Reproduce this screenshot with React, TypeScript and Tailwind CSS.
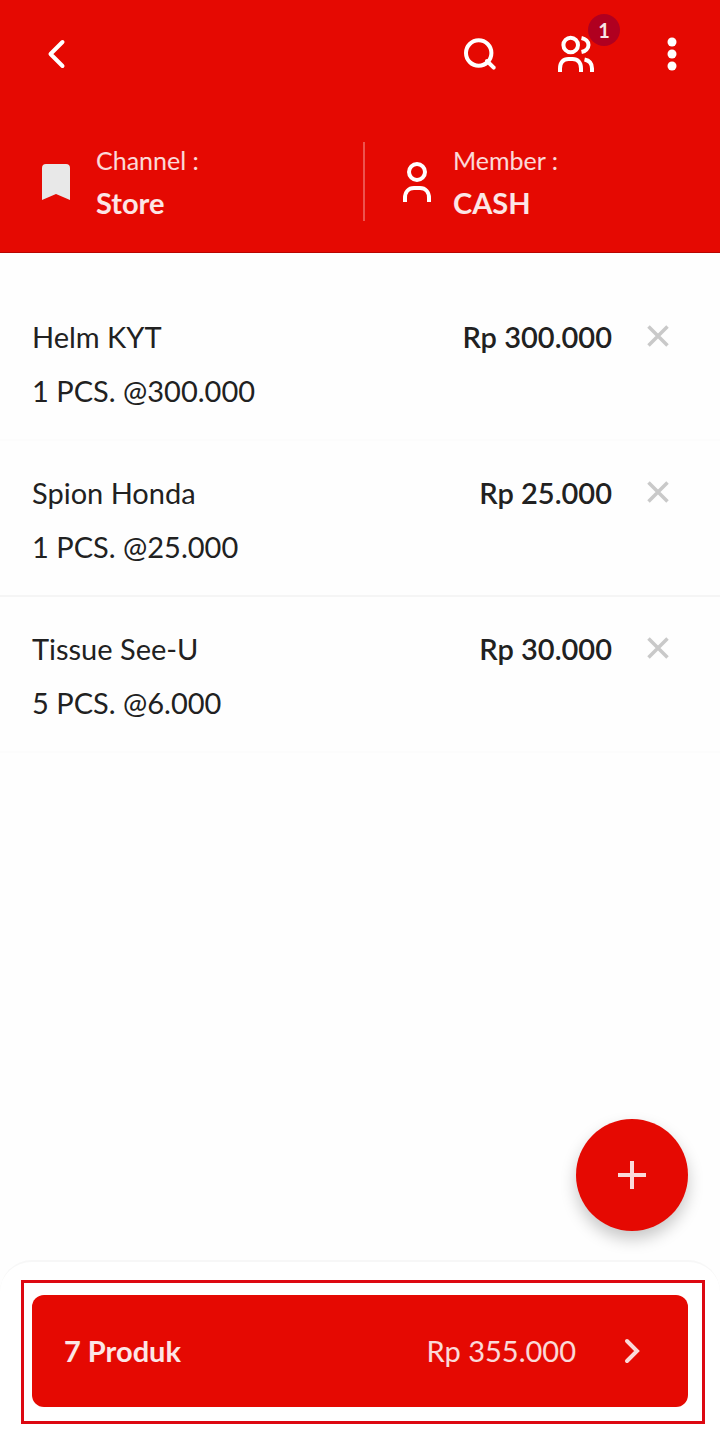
import { ReactNode } from 'react';

const items = [
  { name: 'Helm KYT', qty: '1 PCS. @300.000', total: 'Rp 300.000' },
  { name: 'Spion Honda', qty: '1 PCS. @25.000', total: 'Rp 25.000' },
  { name: 'Tissue See-U', qty: '5 PCS. @6.000', total: 'Rp 30.000' },
];

function Icon({ children, className = 'size-12' }: { children: ReactNode; className?: string }) {
  return (
    <svg
      viewBox="0 0 48 48"
      fill="none"
      stroke="currentColor"
      strokeWidth="4"
      className={className}
      aria-hidden="true"
    >
      {children}
    </svg>
  );
}

function TopBar() {
  return (
    <div className="flex items-center justify-between px-8 pt-[30px]">
      <button aria-label="Kembali">
        <Icon>
          <path d="M30.500 12 18.500 24l12 12" strokeLinecap="round" strokeLinejoin="round" />
        </Icon>
      </button>
      <div className="flex gap-12 -mr-2">
        <button aria-label="Cari">
          <Icon>
            <circle cx="22.700" cy="23" r="12.700" />
            <path d="m31 31 6.700 6.700" strokeLinecap="round" />
          </Icon>
        </button>
        <button aria-label="Antrian" className="relative">
          <Icon>
            <circle cx="18.700" cy="15" r="7.300" />
            <path d="M8 42v-3.500c0-6 3-9.500 8.500-9.500h4c5.500 0 8.500 3.500 8.500 9.500V42" />
            <path d="M29.500 8c4 .8 7 3.600 7 7s-3 6.200-7 7" />
            <path d="M32.500 29.500c5 1 7.500 4 7.500 9V42" />
          </Icon>
          <span className="absolute -top-4 -right-5 size-8 rounded-full bg-[#b00020] text-xl leading-8 font-bold text-white/90">
            1
          </span>
        </button>
        <button aria-label="Menu">
          <Icon>
            <g fill="currentColor" stroke="none">
              <circle cx="24" cy="12" r="4.500" />
              <circle cx="24" cy="24" r="4.500" />
              <circle cx="24" cy="36" r="4.500" />
            </g>
          </Icon>
        </button>
      </div>
    </div>
  );
}

function InfoCell({
  icon,
  label,
  value,
  className,
}: {
  icon: ReactNode;
  label: string;
  value: string;
  className: string;
}) {
  return (
    <button className={`flex items-center text-left ${className}`}>
      {icon}
      <span className="flex flex-col gap-[7px] leading-9">
        <span className="text-[25px] text-white/85">{label}</span>
        <span className="font-bold text-white/90">{value}</span>
      </span>
    </button>
  );
}

export default function App() {
  return (
    <div className="flex min-h-screen flex-col bg-[#fefefe] font-['Lato','Open_Sans',sans-serif] text-[29px] text-[#212121]">
      <header className="border-b border-[#b80500] bg-[#e50902] pb-[31px] text-white">
        <TopBar />
        <div className="mt-16 grid grid-cols-2">
          <InfoCell
            className="gap-4 pl-8"
            label="Channel :"
            value="Store"
            icon={
              <Icon>
                <path
                  d="M14 6h20a4 4 0 0 1 4 4v32l-14-6-14 6V10a4 4 0 0 1 4-4z"
                  fill="#e8e8e8"
                  stroke="none"
                />
              </Icon>
            }
          />
          <InfoCell
            className="gap-3 border-l-2 border-white/30 pl-7 ml-[3px]"
            label="Member :"
            value="CASH"
            icon={
              <Icon>
                <circle cx="24" cy="14" r="8" />
                <path d="M12 44v-4c0-6 3.500-10 9-10h6c5.500 0 9 4 9 10v4" />
              </Icon>
            }
          />
        </div>
      </header>

      <ul className="grow pt-8">
        {items.map((item) => (
          <li
            key={item.name}
            className="flex items-start border-b-2 border-[#fcfcfc] pt-[25px] pr-[38px] pb-[21px] pl-8 leading-[54px] even:border-[#f5f5f5]"
          >
            <div className="grow">
              <p>{item.name}</p>
              <p>{item.qty}</p>
            </div>
            <p className="font-semibold">{item.total}</p>
            <button aria-label={`Hapus ${item.name}`} className="ml-[22px] py-0.5 text-[#c9c9c9]">
              <Icon>
                <path d="m14.500 14.500 19 19m0-19-19 19" strokeWidth="3.500" />
              </Icon>
            </button>
          </li>
        ))}
      </ul>

      <footer className="relative rounded-t-[32px] border-t-2 border-[#f7f7f7] bg-white pt-[18px] pr-[15px] pb-[15px] pl-[21px]">
        <button
          aria-label="Tambah"
          className="absolute right-8 bottom-full mb-[31px] flex size-28 items-center justify-center rounded-full bg-[#e50902] text-white/85 shadow-[0_8px_16px_rgba(0,0,0,0.22)]"
        >
          <Icon>
            <path d="M24 10v28M10 24h28" />
          </Icon>
        </button>
        <div className="border-3 border-[#dd0812] pt-3 pr-3.5 pb-3.5 pl-2">
          <button className="flex h-28 w-full items-center rounded-xl bg-[#e50902] px-8 text-white/85">
            <span className="grow text-left font-bold text-white/90">7 Produk</span>
            <span>Rp 355.000</span>
            <Icon className="ml-8 size-12">
              <path d="m19 14 10 10-10 10" strokeLinecap="round" />
            </Icon>
          </button>
        </div>
      </footer>
    </div>
  );
}
